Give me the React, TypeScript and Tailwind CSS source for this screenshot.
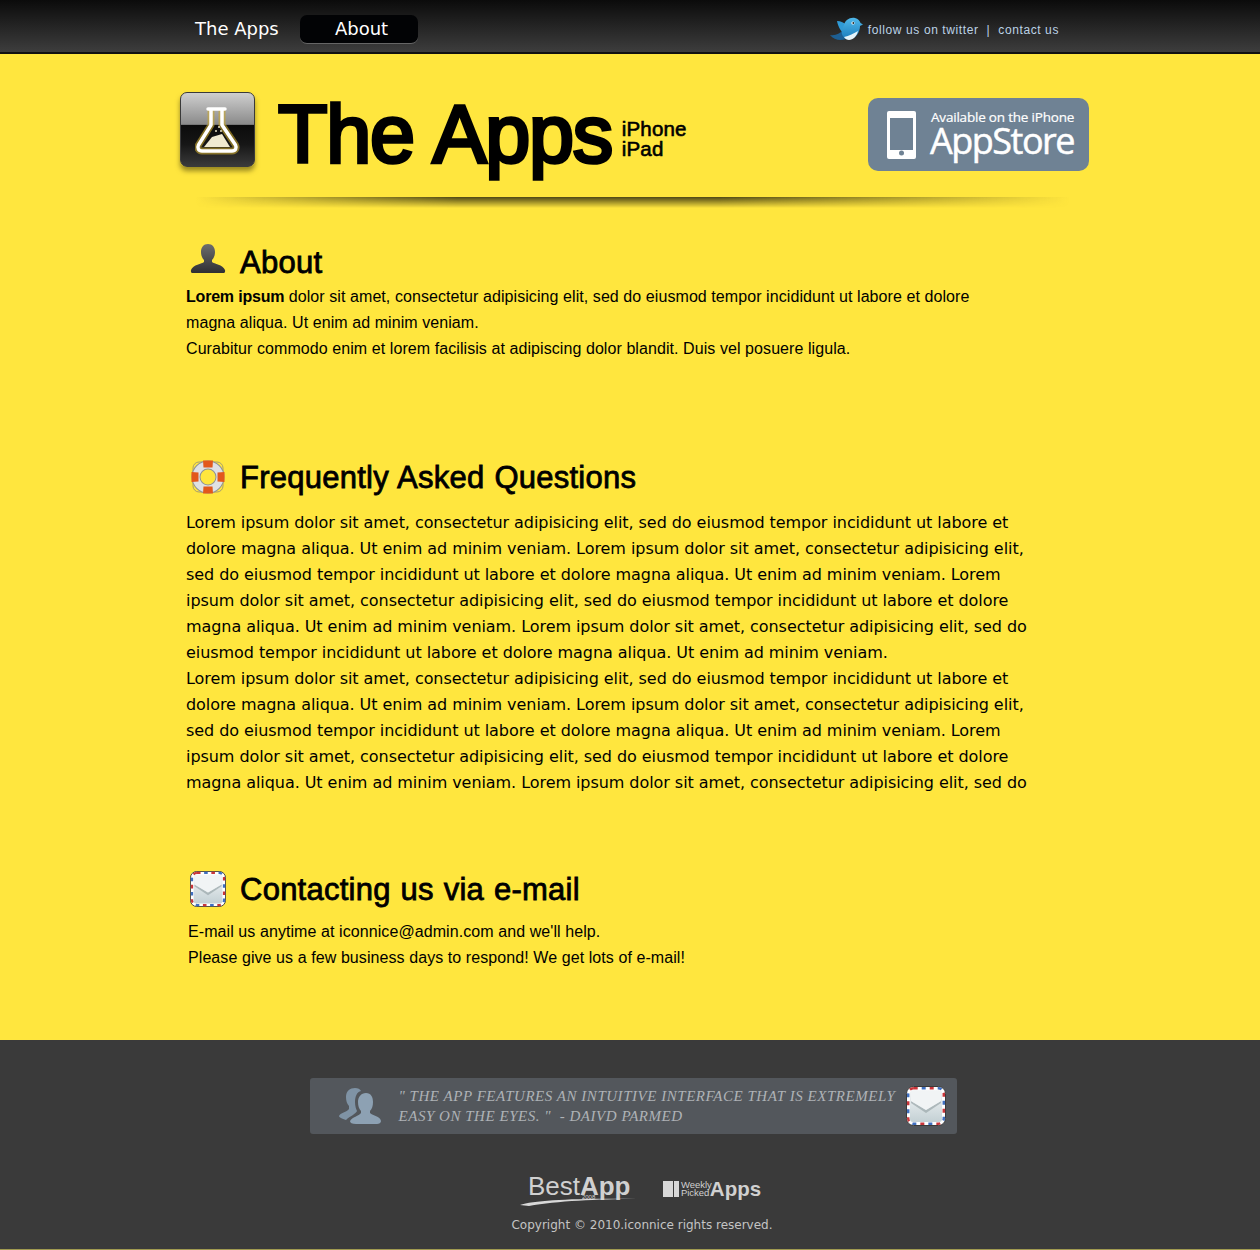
import React from "react";

const faqLines = [
	"Lorem ipsum dolor sit amet, consectetur adipisicing elit, sed do eiusmod tempor incididunt ut labore et",
	"dolore magna aliqua. Ut enim ad minim veniam. Lorem ipsum dolor sit amet, consectetur adipisicing elit,",
	"sed do eiusmod tempor incididunt ut labore et dolore magna aliqua. Ut enim ad minim veniam. Lorem",
	"ipsum dolor sit amet, consectetur adipisicing elit, sed do eiusmod tempor incididunt ut labore et dolore",
	"magna aliqua. Ut enim ad minim veniam. Lorem ipsum dolor sit amet, consectetur adipisicing elit, sed do",
	"eiusmod tempor incididunt ut labore et dolore magna aliqua. Ut enim ad minim veniam.",
	"Lorem ipsum dolor sit amet, consectetur adipisicing elit, sed do eiusmod tempor incididunt ut labore et",
	"dolore magna aliqua. Ut enim ad minim veniam. Lorem ipsum dolor sit amet, consectetur adipisicing elit,",
	"sed do eiusmod tempor incididunt ut labore et dolore magna aliqua. Ut enim ad minim veniam. Lorem",
	"ipsum dolor sit amet, consectetur adipisicing elit, sed do eiusmod tempor incididunt ut labore et dolore",
	"magna aliqua. Ut enim ad minim veniam. Lorem ipsum dolor sit amet, consectetur adipisicing elit, sed do",
];

const Bird = () => (
	<svg width="34" height="24" viewBox="0 0 34 24">
		<defs>
			<linearGradient id="birdBody" x1="0" y1="0" x2="0" y2="1">
				<stop offset="0" stopColor="#4fb8ea" />
				<stop offset="1" stopColor="#1b7dbd" />
			</linearGradient>
		</defs>
		<path d="M0 18C6 19 10 16 12 14L16 22C10 24 4 23 0 18z" fill="#1d5f93" />
		<path d="M7 4C11 4 14 6 17 8L16 17C12 17 8 10 7 4z" fill="#2f9ad6" />
		<path d="M14 8C15 3 20 0 25 1C28 1.500 30 4 30.500 6L33 7.500L30 9C30 15 26 22 19 22C14 22 11 18 12 14C12 12 13 10 14 8z" fill="url(#birdBody)" />
		<path d="M14 20C19 19 24 16 28 14C27 19 23 23 19 23C17 23 15 22 14 20z" fill="#e6f4fa" />
		<circle cx="23" cy="6" r="1.600" fill="#fff" />
		<circle cx="23.300" cy="6" r=".9" fill="#222" />
	</svg>
);

const FlaskIcon = () => (
	<div className="relative w-[75px] h-[75px] rounded-[7px] border border-[#3a3a3a] overflow-hidden bg-[linear-gradient(to_bottom,#cfcfcf_0%,#8a8a8a_43%,#0b0b0b_44%,#161616_70%,#3a3a3a_100%)] shadow-[0_4px_5px_rgba(70,60,10,0.55)]">
		<svg className="absolute left-[14px] top-[13px]" width="46" height="50" viewBox="0 0 46 50">
			<path d="M16 4V19L3.500 39C2 42 3.500 45 7 45H37C40.500 45 42 42 40.500 39L27 19V4" fill="none" stroke="#c9a92e" strokeWidth="7" strokeOpacity=".6" strokeLinejoin="round" />
			<path d="M13 3H30" stroke="#fff" strokeWidth="3.500" strokeLinecap="round" />
			<path d="M16 4V19L3.500 39C2 42 3.500 45 7 45H37C40.500 45 42 42 40.500 39L27 19V4" fill="none" stroke="#fff" strokeWidth="3.500" strokeLinejoin="round" />
			<path d="M17 31L27 28L35 41H9z" fill="#f0ead0" />
			<circle cx="21" cy="25" r="1" fill="#e8e2c4" />
			<circle cx="24" cy="21" r="1" fill="#e8e2c4" />
			<circle cx="26" cy="25" r="1" fill="#e8e2c4" />
		</svg>
	</div>
);

const PersonIcon = () => (
	<svg width="36" height="32" viewBox="0 0 36 32" className="mb-[6px]">
		<defs>
			<linearGradient id="personFill" x1="0" y1="0" x2="0" y2="1">
				<stop offset="0" stopColor="#6d6d6d" />
				<stop offset="1" stopColor="#2f2f33" />
			</linearGradient>
		</defs>
		<path d="M18 1c4.500 0 7 3.500 7 8 0 3-1 6-3 8v2c2 2 11 2.500 13 8 .3 1.500 0 3-1 3H2c-1 0-1.300-1.500-1-3 2-5.500 11-6 13-8v-2c-2-2-3-5-3-8 0-4.500 2.500-8 7-8z" fill="url(#personFill)" />
	</svg>
);

const BuoyIcon = () => (
	<svg width="36" height="36" viewBox="0 0 36 36">
		<rect x="3" y="3" width="30" height="30" rx="6" fill="none" stroke="#a89f70" strokeWidth="1" />
		<circle cx="18" cy="18" r="12" fill="none" stroke="#8f9296" strokeWidth="9" />
		<circle cx="18" cy="18" r="12" fill="none" stroke="#dfe1e4" strokeWidth="7" />
		<path d="M13 1.500h10l-.5 7h-9z" fill="#e2581c" />
		<path d="M13 34.500h10l-.5-7h-9z" fill="#e2581c" />
		<path d="M1.500 13v10l7-.5v-9z" fill="#e2581c" />
		<path d="M34.500 13v10l-7-.5v-9z" fill="#e2581c" />
	</svg>
);

const MailIcon = ({ size }: { size: number }) => (
	<svg width={size} height={size} viewBox="0 0 40 40">
		<defs>
			<linearGradient id={`mailFill${size}`} x1="0" y1="0" x2="0" y2="1">
				<stop offset="0" stopColor="#f4f6f7" />
				<stop offset="1" stopColor="#c3d0d4" />
			</linearGradient>
		</defs>
		<rect x=".5" y=".5" width="39" height="39" rx="7" fill="#fff" stroke="#3a3a3a" strokeWidth="1" />
		<rect x="4" y="4" width="32" height="32" rx="3" fill={`url(#mailFill${size})`} />
		<rect x="2.200" y="2.200" width="35.600" height="35.600" rx="5.500" fill="none" stroke="#c9353a" strokeWidth="2.500" strokeDasharray="4 12" />
		<rect x="2.200" y="2.200" width="35.600" height="35.600" rx="5.500" fill="none" stroke="#3f6fc0" strokeWidth="2.500" strokeDasharray="4 12" strokeDashoffset="8" />
		<path d="M5 15L20 24L35 15V17L20 27L5 17z" fill="#9aa6aa" opacity=".7" />
		<path d="M5 5H35V15L20 24L5 15z" fill="#f1f4f5" />
	</svg>
);

const PeopleIcon = () => (
	<svg width="42" height="36" viewBox="0 0 42 36">
		<path d="M16 0C19 0 21 1 22 3C18 4 16 8 16 14C16 18 17 21 18 23C17 26 11 28 7 32C3 31 0 29 0 28C1 25 8 24 10 21V18C8 16 7 13 7 9C7 3 11 0 16 0z" fill="#7f93a5" />
		<path d="M27 5C32 5 34 9 34 14C34 18 33 21 31 23V25C34 28 41 28 42 33C42 35 40 36 38 36H17C13 36 11 35 11 33C13 29 20 28 22 25V23C20 21 19 18 19 14C19 9 22 5 27 5z" fill="#8da1b3" />
	</svg>
);

const PhoneGlyph = () => (
	<svg width="29" height="48" viewBox="0 0 29 48">
		<rect width="29" height="48" rx="2" fill="#fff" />
		<rect x="3" y="7" width="23" height="32" fill="#6f8294" />
		<circle cx="14.500" cy="42" r="2.500" fill="#6f8294" />
	</svg>
);

const Heading = ({ icon, title }: { icon: React.ReactNode; title: string }) => (
	<div className="flex items-center">
		<div className="w-[54px] flex justify-start pl-[4px]">{icon}</div>
		<h2 className="pt-[2px] text-[31px] leading-[34px] font-normal tracking-[0.25px] [word-spacing:1px] text-black [-webkit-text-stroke:0.8px_black]">{title}</h2>
	</div>
);

const App = () => {
	return (
		<div className="w-[1260px] h-[1250px] flex flex-col bg-[#ffe63e] font-['Liberation_Sans',sans-serif] overflow-hidden">
			<div className="h-[54px] shrink-0 flex items-center pt-[6px] pl-[195px] pr-[201px] border-b-2 border-[#111] bg-[linear-gradient(to_bottom,#0b0b0b,#3d3d3d)]">
				<span className="w-[105px] mb-[2px] text-[18px] text-white font-['DejaVu_Sans',sans-serif]">The Apps</span>
				<span className="w-[118px] h-[29px] flex items-center justify-center pl-[5px] rounded-[7px] border-b border-[#666] bg-[#020305] text-[18px] text-white font-['DejaVu_Sans',sans-serif]">About</span>
				<div className="ml-auto flex items-center text-[12px] text-[#bcd2e6] tracking-[0.6px]">
					<Bird />
					<span className="ml-[4px] mt-[2px]">follow us on twitter</span>
					<span className="mx-[8px] mt-[2px]">|</span>
					<span className="mt-[2px]">contact us</span>
				</div>
			</div>

			<div className="pl-[180px] pr-[171px] pt-[38px] flex items-start">
				<FlaskIcon />
				<div className="ml-[23px] mt-[-3px] text-[81px] leading-[90px] font-normal tracking-[-1.300px] [word-spacing:2px] [-webkit-text-stroke:3.500px_black] text-black">The Apps</div>
				<div className="ml-[10px] mt-[27px] text-[20.500px] leading-[20px] font-normal tracking-[0.15px] [-webkit-text-stroke:0.6px_black] text-black">
					<div>iPhone</div>
					<div>iPad</div>
				</div>
				<div className="ml-auto mt-[6px] w-[221px] h-[73px] rounded-[10px] bg-[#6f8294] flex items-center pl-[19px] text-white font-['Open_Sans',sans-serif]">
					<PhoneGlyph />
					<div className="ml-[14px] mb-[3px]">
						<div className="pl-[1px] text-[13.500px] leading-[16px] font-medium tracking-[-0.2px] [-webkit-text-stroke:0.2px_white]">Available on the iPhone</div>
						<div className="text-[36px] leading-[32px] font-medium tracking-[-1.500px] [-webkit-text-stroke:0.5px_white]">AppStore</div>
					</div>
				</div>
			</div>

			<div className="ml-[195px] mt-[18px] w-[875px] h-[11px] bg-[linear-gradient(to_right,transparent,#4f4716_30%,#4f4716_60%,transparent)] [mask-image:linear-gradient(to_bottom,black,transparent)]" />

			<section className="pl-[186px] mt-[35px]">
				<Heading icon={<PersonIcon />} title="About" />
				<div className="mt-[3px] text-[16px] leading-[26px] tracking-[0.075px] text-black w-[800px]">
					<p>
						<b className="tracking-[-0.2px]">Lorem ipsum</b> dolor sit amet, consectetur adipisicing elit, sed do eiusmod tempor incididunt ut labore et dolore magna aliqua. Ut enim ad minim veniam.
					</p>
					<p>Curabitur commodo enim et lorem facilisis at adipiscing dolor blandit. Duis vel posuere ligula.</p>
				</div>
			</section>

			<section className="pl-[186px] mt-[97px]">
				<Heading icon={<BuoyIcon />} title="Frequently Asked Questions" />
				<div className="mt-[15px] text-[16px] leading-[26px] tracking-[-0.06px] text-black font-['DejaVu_Sans',sans-serif] whitespace-nowrap">
					{faqLines.map((line, i) => (
						<div key={i}>{line}</div>
					))}
				</div>
			</section>

			<section className="pl-[186px] mt-[75px]">
				<Heading icon={<MailIcon size={36} />} title="Contacting us via e-mail" />
				<div className="mt-[12px] ml-[2px] text-[16px] leading-[26px] tracking-[0.08px] text-black">
					<p>E-mail us anytime at iconnice@admin.com and we'll help.</p>
					<p>Please give us a few business days to respond! We get lots of e-mail!</p>
				</div>
			</section>

			<footer className="mt-auto h-[210px] shrink-0 bg-[#3a3a3a] border-b border-[#a09a50] flex flex-col items-center pt-[38px]">
				<div className="w-[647px] h-[56px] ml-[6px] rounded-[3px] bg-[#53575c] flex items-center pl-[29px] pr-[11px]">
					<PeopleIcon />
					<div className="ml-[18px] flex-1 text-[15px] leading-[20px] italic tracking-[0.53px] text-[#aeb2b6] font-['Liberation_Serif',serif] whitespace-nowrap">
						<div>" THE APP FEATURES AN INTUITIVE INTERFACE THAT IS EXTREMELY</div>
						<div>EASY ON THE EYES. "&nbsp; - DAIVD PARMED</div>
					</div>
					<MailIcon size={40} />
				</div>
				<div className="mt-[36px] flex items-center ml-[21px] text-[#d0d0d0]">
					<div className="relative w-[117px] h-[38px]">
						<span className="absolute left-[8px] top-0 text-[26px] leading-[32px]">
							Best<b className="font-bold">App</b>
						</span>
						<span className="absolute left-[62px] top-[24px] text-[6px] leading-[6px]">2008</span>
						<svg className="absolute left-0 top-[26px]" width="117" height="10" viewBox="0 0 117 10">
							<path d="M0 9c15-5 60-7 117-6-40 0-80 2-108 7z" fill="#d8d8d8" />
						</svg>
					</div>
					<div className="ml-[26px] flex items-center">
						<div className="w-[10px] h-[16px] bg-[#d8d8d8]" />
						<div className="w-[5px] h-[16px] ml-[1px] bg-[#d8d8d8]" />
						<div className="text-[9.500px] leading-[8px] ml-[2px]">
							<div>Weekly</div>
							<div>Picked</div>
						</div>
						<span className="-ml-[2px] text-[20.500px] leading-[24px] font-bold">Apps</span>
					</div>
				</div>
				<div className="mt-[9px] ml-[24px] text-[12px] leading-[16px] text-[#c4c4c4] font-['DejaVu_Sans',sans-serif]">
					Copyright © 2010.iconnice rights reserved.
				</div>
			</footer>
		</div>
	);
};

export default App;
